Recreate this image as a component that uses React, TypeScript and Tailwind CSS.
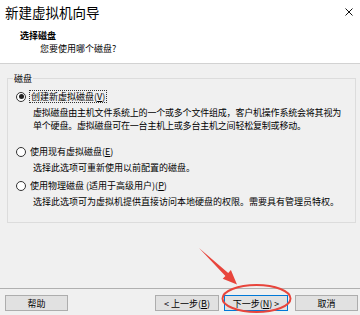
import React from "react";

const font = { fontFamily: '"Noto Sans CJK SC", "Noto Sans", sans-serif' };

function Radio({ checked }: { checked?: boolean }) {
  return (
    <span className="w-[10px] h-[10px] rounded-full border border-[#333] bg-white flex items-center justify-center shrink-0">
      {checked && <span className="w-[5px] h-[5px] rounded-full bg-[#222]" />}
    </span>
  );
}

function Btn({ children, primary, w }: { children: React.ReactNode; primary?: boolean; w: string }) {
  return (
    <div
      className={`${w} h-[16px] flex items-center justify-center text-[9px] leading-none bg-[#e1e1e1] border ${
        primary ? "border-[#0078d7]" : "border-[#adadad]"
      }`}
    >
      {children}
    </div>
  );
}

export default function App() {
  return (
    <div className="relative w-[360px] h-[315px] overflow-hidden bg-[#f0f0f0] flex flex-col text-black" style={font}>
      {/* title bar */}
      <div className="h-[25px] bg-white flex items-center justify-between pl-[5px] pr-[7px]">
        <span className="text-[13.5px] leading-none">新建虚拟机向导</span>
        <svg width="8" height="8" viewBox="0 0 8 8" className="mt-[-2px]">
          <path d="M0.5 0.5 L7.5 7.5 M7.5 0.5 L0.5 7.5" stroke="#111" strokeWidth="1" />
        </svg>
      </div>

      {/* header */}
      <div className="h-[39px] bg-white border-b border-[#d2d2d2] pt-[4px]">
        <div className="pl-[20px] text-[9px] leading-[13px] font-bold">选择磁盘</div>
        <div className="pl-[40px] text-[9px] leading-[13px]">您要使用哪个磁盘?</div>
      </div>

      {/* body */}
      <div className="flex-1 pt-[14px]">
        <div className="relative ml-[7px] w-[349px] h-[145px] border border-[#dcdcdc] text-[9px] leading-[13px]">
          <span className="absolute top-[-7px] left-[5px] px-[1px] bg-[#f0f0f0]">磁盘</span>

          <div className="flex flex-col pt-[11px]">
            <div className="flex items-center pl-[8px] gap-[3px]">
              <Radio checked />
              <span className="border border-dotted border-[#333] px-[1px] leading-[11px]">
                创建新虚拟磁盘(<u>V</u>)
              </span>
            </div>
            <div className="mt-[3px] pl-[25px] whitespace-nowrap tracking-[-0.2px]">
              虚拟磁盘由主机文件系统上的一个或多个文件组成，客户机操作系统会将其视为
              <br />
              单个硬盘。虚拟磁盘可在一台主机上或多台主机之间轻松复制或移动。
            </div>

            <div className="mt-[13px] flex items-center pl-[8px] gap-[4px]">
              <Radio />
              <span>
                使用现有虚拟磁盘(<u>E</u>)
              </span>
            </div>
            <div className="mt-[3px] pl-[25px]">选择此选项可重新使用以前配置的磁盘。</div>

            <div className="mt-[5px] flex items-center pl-[8px] gap-[4px]">
              <Radio />
              <span>
                使用物理磁盘 (适用于高级用户)(<u>P</u>)
              </span>
            </div>
            <div className="mt-[3px] pl-[25px]">选择此选项可为虚拟机提供直接访问本地硬盘的权限。需要具有管理员特权。</div>
          </div>
        </div>
      </div>

      {/* footer */}
      <div className="h-[27px] border-t border-[#b0b0b0] pt-[6px] flex items-start">
        <div className="ml-[5px]">
          <Btn w="w-[63px]">帮助</Btn>
        </div>
        <div className="flex-1" />
        <div className="flex gap-[5px] mr-[2px]">
          <Btn w="w-[64px]">
            &lt; 上一步(<u>B</u>)
          </Btn>
          <Btn w="w-[64px]" primary>
            下一步(<u>N</u>) &gt;
          </Btn>
          <div className="ml-[2px]">
            <Btn w="w-[63px]">取消</Btn>
          </div>
        </div>
      </div>

      {/* red annotation */}
      <svg className="absolute inset-0 pointer-events-none" width="360" height="315" viewBox="0 0 360 315">
        <polygon
          points="199,248 225.4,275.9 222.7,278.8 237,284.5 230.9,270 228.2,272.9"
          fill="#e8453c"
        />
        <ellipse cx="256.5" cy="298.5" rx="34" ry="13.5" fill="none" stroke="#e8453c" strokeWidth="2" />
      </svg>
    </div>
  );
}
